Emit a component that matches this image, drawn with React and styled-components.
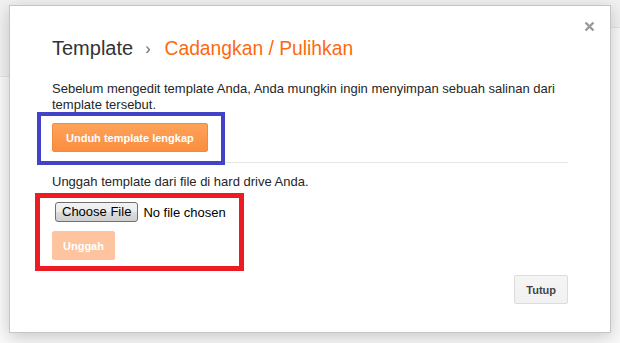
import React from 'react'
import styled, {createGlobalStyle} from 'styled-components'

const GlobalStyle = createGlobalStyle`
  html, body {
    margin: 0;
    height: 100%;
  }
  body {
    font-family: "Liberation Sans", Arial, sans-serif;
    background:
      linear-gradient(to bottom, #f1f1f1 76px, #e4e4e4 76px, #e4e4e4 77px, #f9f9f9 77px) left top / 50% 100% no-repeat,
      linear-gradient(to bottom, #f1f1f1 27px, #e4e4e4 27px, #e4e4e4 28px, #f9f9f9 28px) right top / 50% 100% no-repeat;
  }
`

const Page = styled.div`
  padding: 5px 0 0 9px;
`

const Dialog = styled.div`
  position: relative;
  box-sizing: border-box;
  width: 602px;
  height: 328px;
  padding: 30px 42px 0;
  background: #fff;
  border: 1px solid #c5c5c5;
  box-shadow: 0 4px 16px rgba(0, 0, 0, 0.2);
  display: flex;
  flex-direction: column;
`

const Close = styled.button`
  position: absolute;
  top: 15px;
  right: 15px;
  width: 11px;
  height: 11px;
  padding: 0;
  border: 0;
  background: none;
  cursor: pointer;
  svg { display: block; }
`

const Title = styled.h1`
  margin: 0 0 20px;
  font-size: 20px;
  line-height: 24px;
  font-weight: normal;
  color: #333;
  white-space: nowrap;
`

const Crumb = styled.span`
  display: inline-block;
  margin: 0 14px 0 12px;
  font-size: 16px;
  color: #666;
  vertical-align: 1px;
`

const Current = styled.span`
  font-size: 19.3px;
  color: #fb6a10;
`

const Text = styled.p`
  margin: ${p => p.$top || 0}px 0 0;
  font-size: 13px;
  line-height: 16px;
  color: #262626;
`

const Marked = styled.div`
  position: relative;
  align-self: flex-start;
  margin-top: ${p => p.$top}px;
`

const Frame = styled.div`
  position: absolute;
  top: ${p => p.$inset[0]}px;
  right: ${p => p.$inset[1]}px;
  bottom: ${p => p.$inset[2]}px;
  left: ${p => p.$inset[3]}px;
  border: ${p => p.$width}px solid ${p => p.$color};
  z-index: 2;
  pointer-events: none;
`

const Button = styled.button`
  box-sizing: border-box;
  height: 29px;
  padding: 0 ${p => p.$pad || 10}px;
  font-family: inherit;
  font-size: 11px;
  font-weight: bold;
  border-radius: 2px;
  cursor: pointer;
  color: ${p => p.$variant === 'plain' ? '#444' : '#fff'};
  border: 1px solid ${p =>
    p.$variant === 'plain' ? '#dcdcdc' : p.disabled ? '#fec39f' : '#f08a3e'};
  background: ${p =>
    p.$variant === 'plain'
      ? 'linear-gradient(#f5f5f5, #f1f1f1)'
      : p.disabled
        ? '#fec39f'
        : 'linear-gradient(#ffa35a, #f98e3e)'};
  &:disabled { cursor: default; }
`

const Rule = styled.hr`
  margin: 10px 0 0;
  border: 0;
  border-top: 1px solid #e5e5e5;
`

const Upload = styled.div`
  display: flex;
  flex-direction: column;
  align-items: flex-start;
  gap: 9px;
`

const FileRow = styled.label`
  display: flex;
  align-items: center;
  gap: 5px;
  margin-left: 3px;
  font-size: 13px;
  color: #000;
`

const FileButton = styled.span`
  box-sizing: border-box;
  height: 20px;
  padding: 0 6px;
  line-height: 18px;
  border: 1px solid #707070;
  border-radius: 3px;
  background: linear-gradient(#f2f2f2 0%, #ebebeb 50%, #dddddd 51%, #cfcfcf 100%);
`

const Footer = styled.div`
  display: flex;
  justify-content: flex-end;
  margin-top: 15px;
`

const CloseIcon = () => (
  <svg width="11" height="11" viewBox="0 0 11 11">
    <path d="M1.5 1.5 L9.5 9.5 M9.5 1.5 L1.5 9.5" stroke="#9a9a9a" strokeWidth="2.4" />
  </svg>
)

const App = () => {
  return (
    <Page>
      <GlobalStyle />
      <Dialog>
        <Close aria-label="Tutup"><CloseIcon /></Close>
        <Title>
          Template<Crumb>›</Crumb><Current>Cadangkan / Pulihkan</Current>
        </Title>
        <Text>
          Sebelum mengedit template Anda, Anda mungkin ingin menyimpan sebuah salinan dari template tersebut.
        </Text>
        <Marked $top={10}>
          <Frame $inset={[-11, -17, -13, -15]} $width={4} $color="#4243c6" />
          <Button $pad={13}>Unduh template lengkap</Button>
        </Marked>
        <Rule />
        <Text $top={11}>Unggah template dari file di hard drive Anda.</Text>
        <Marked $top={12}>
          <Frame $inset={[-9, -18, -11, -17]} $width={5} $color="#ed1c24" />
          <Upload>
            <FileRow>
              <FileButton>Choose File</FileButton>
              <span>No file chosen</span>
            </FileRow>
            <Button disabled $pad={10}>Unggah</Button>
          </Upload>
        </Marked>
        <Footer>
          <Button $variant="plain" $pad={11}>Tutup</Button>
        </Footer>
      </Dialog>
    </Page>
  )
}

export default App
